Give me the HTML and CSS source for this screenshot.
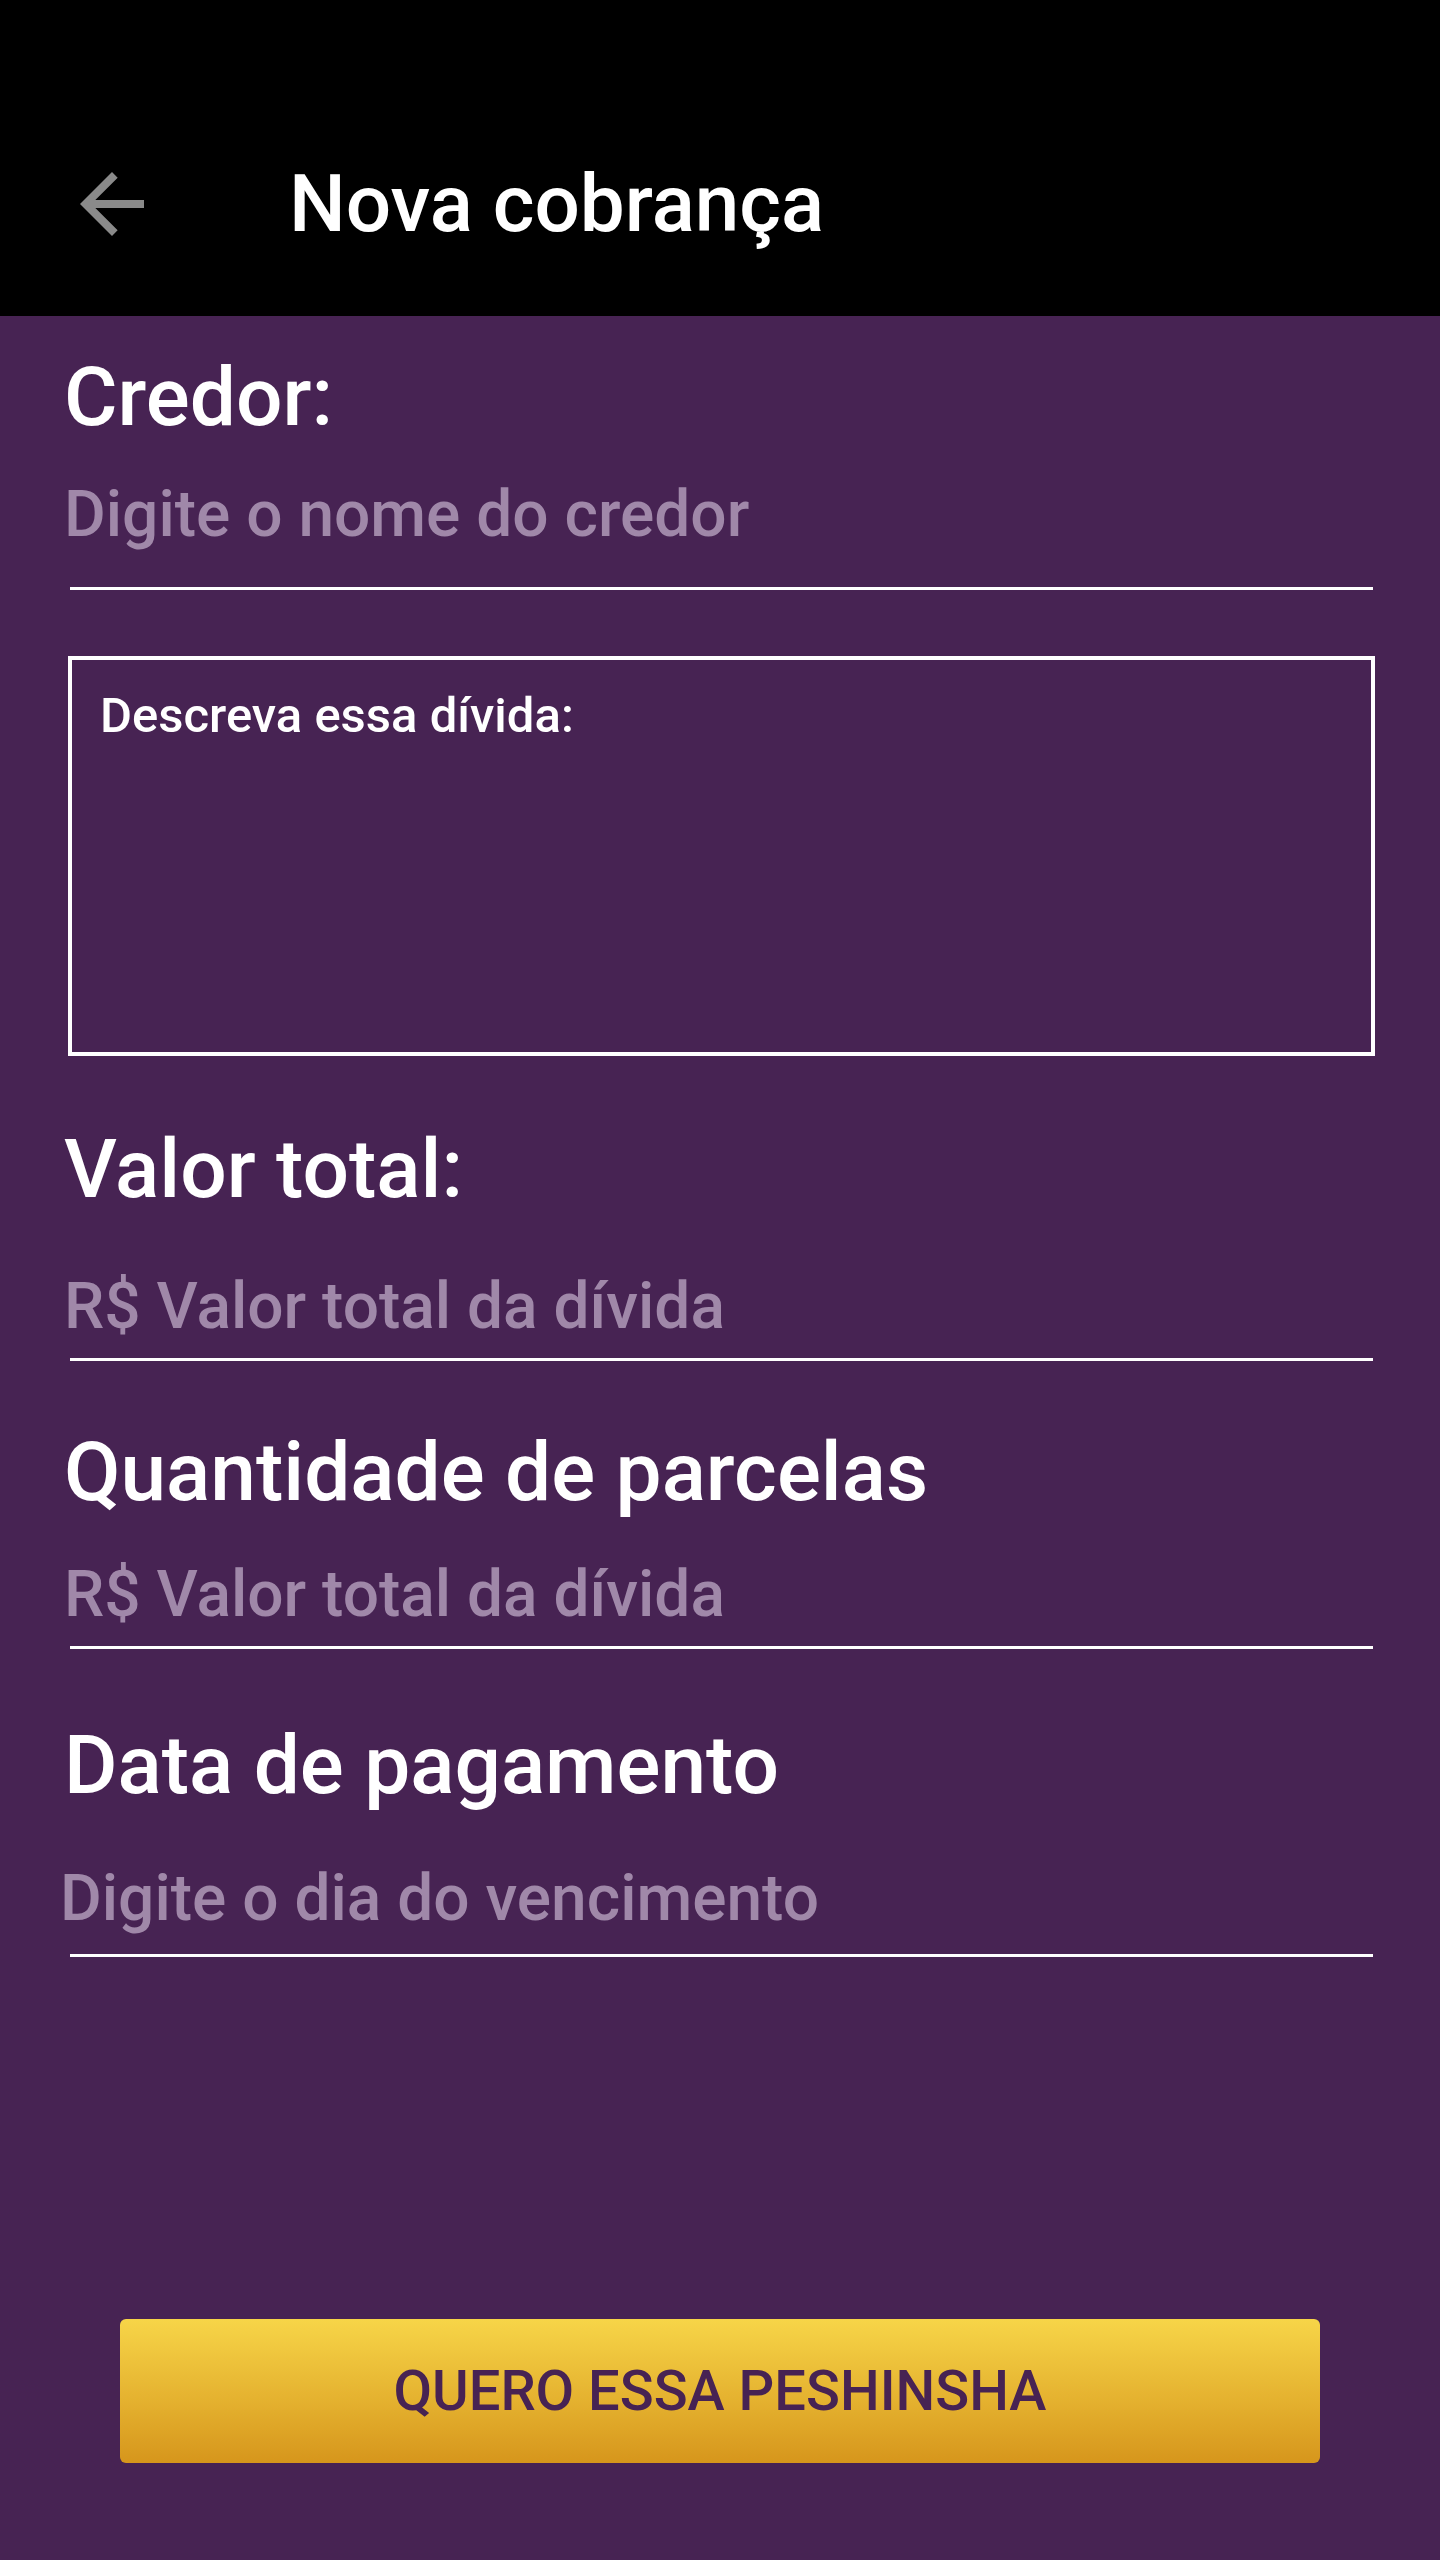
FILE: index.html
```html
<!DOCTYPE html>
<html lang="pt-BR">
<head>
<meta charset="utf-8">
<title>Nova cobrança</title>
<link rel="stylesheet" href="styles.css">
</head>
<body>
<header class="toolbar">
  <button class="back" aria-label="Voltar">
    <svg viewBox="0 0 24 24" width="96" height="96"><path fill="#8a8a8a" d="M20 11H7.83l5.59-5.59L12 4l-8 8 8 8 1.41-1.41L7.83 13H20v-2z"/></svg>
  </button>
  <h1 class="title">Nova cobrança</h1>
</header>
<main class="screen">
  <form class="form">
    <div class="field field-credor">
      <div class="label">Credor:</div>
      <div class="input">Digite o nome do credor</div>
    </div>
    <div class="textarea">Descreva essa dívida:</div>
    <div class="field field-valor">
      <div class="label">Valor total:</div>
      <div class="input">R$ Valor total da dívida</div>
    </div>
    <div class="field field-parcelas">
      <div class="label">Quantidade de parcelas</div>
      <div class="input">R$ Valor total da dívida</div>
    </div>
    <div class="field field-data">
      <div class="label">Data de pagamento</div>
      <div class="input input-shift">Digite o dia do vencimento</div>
    </div>
  </form>
  <div class="actions">
    <button class="cta">QUERO ESSA PESHINSHA</button>
  </div>
</main>
</body>
</html>
```
FILE: styles.css
```css
* { box-sizing: border-box; }
html, body {
  margin: 0;
  padding: 0;
}
body {
  width: 1440px;
  height: 2560px;
  background: #472353;
  font-family: Roboto, "Noto Sans", sans-serif;
  overflow: hidden;
}
.toolbar {
  height: 316px;
  background: #000;
  display: flex;
  align-items: center;
  padding-top: 92px;
}
.back {
  width: 96px;
  height: 96px;
  margin-left: 64px;
  padding: 0;
  border: 0;
  background: transparent;
  display: flex;
}
.title {
  margin: 0 0 0 129px;
  color: #fff;
  font-size: 80px;
  font-weight: 500;
  line-height: 94px;
}
.screen {
  display: flex;
  flex-direction: column;
}
.form {
  padding: 33px 67px 0 64px;
  display: flex;
  flex-direction: column;
}
.label {
  color: #fff;
  font-size: 82px;
  font-weight: 500;
  line-height: 96px;
  white-space: nowrap;
}
.input {
  color: #a088a9;
  font-size: 64px;
  font-weight: 500;
  line-height: 75px;
  white-space: nowrap;
}
.input::after {
  content: "";
  display: block;
  height: 3px;
  margin-left: 6px;
  background: #fff;
}
.input-shift { margin-left: -4px; }
.input-shift::after { margin-left: 10px; }
.field-credor .input { margin-top: 32px; }
.field-credor .input::after { margin-top: 35px; }
.textarea {
  margin: 66px -2px 0 4px;
  height: 400px;
  border: 4px solid #fff;
  padding: 27px 0 0 28px;
  color: #fff;
  font-size: 49px;
  font-weight: 500;
  line-height: 57px;
}
.field-valor { margin-top: 65px; }
.field-valor .input { margin-top: 52px; }
.field-valor .input::after { margin-top: 14px; }
.field-parcelas { margin-top: 63px; }
.field-parcelas .input { margin-top: 37px; }
.field-parcelas .input::after { margin-top: 14px; }
.field-data { margin-top: 68px; }
.field-data .input { margin-top: 48px; }
.field-data .input::after { margin-top: 18px; }
.actions {
  margin-top: 362px;
  display: flex;
  justify-content: center;
}
.cta {
  width: 1200px;
  height: 144px;
  border: 0;
  border-radius: 6px;
  background: linear-gradient(#f7d548, #d6961c);
  color: #472353;
  font-family: Roboto, "Noto Sans", sans-serif;
  font-size: 56px;
  font-weight: 500;
  line-height: 144px;
  padding: 0;
}
```
